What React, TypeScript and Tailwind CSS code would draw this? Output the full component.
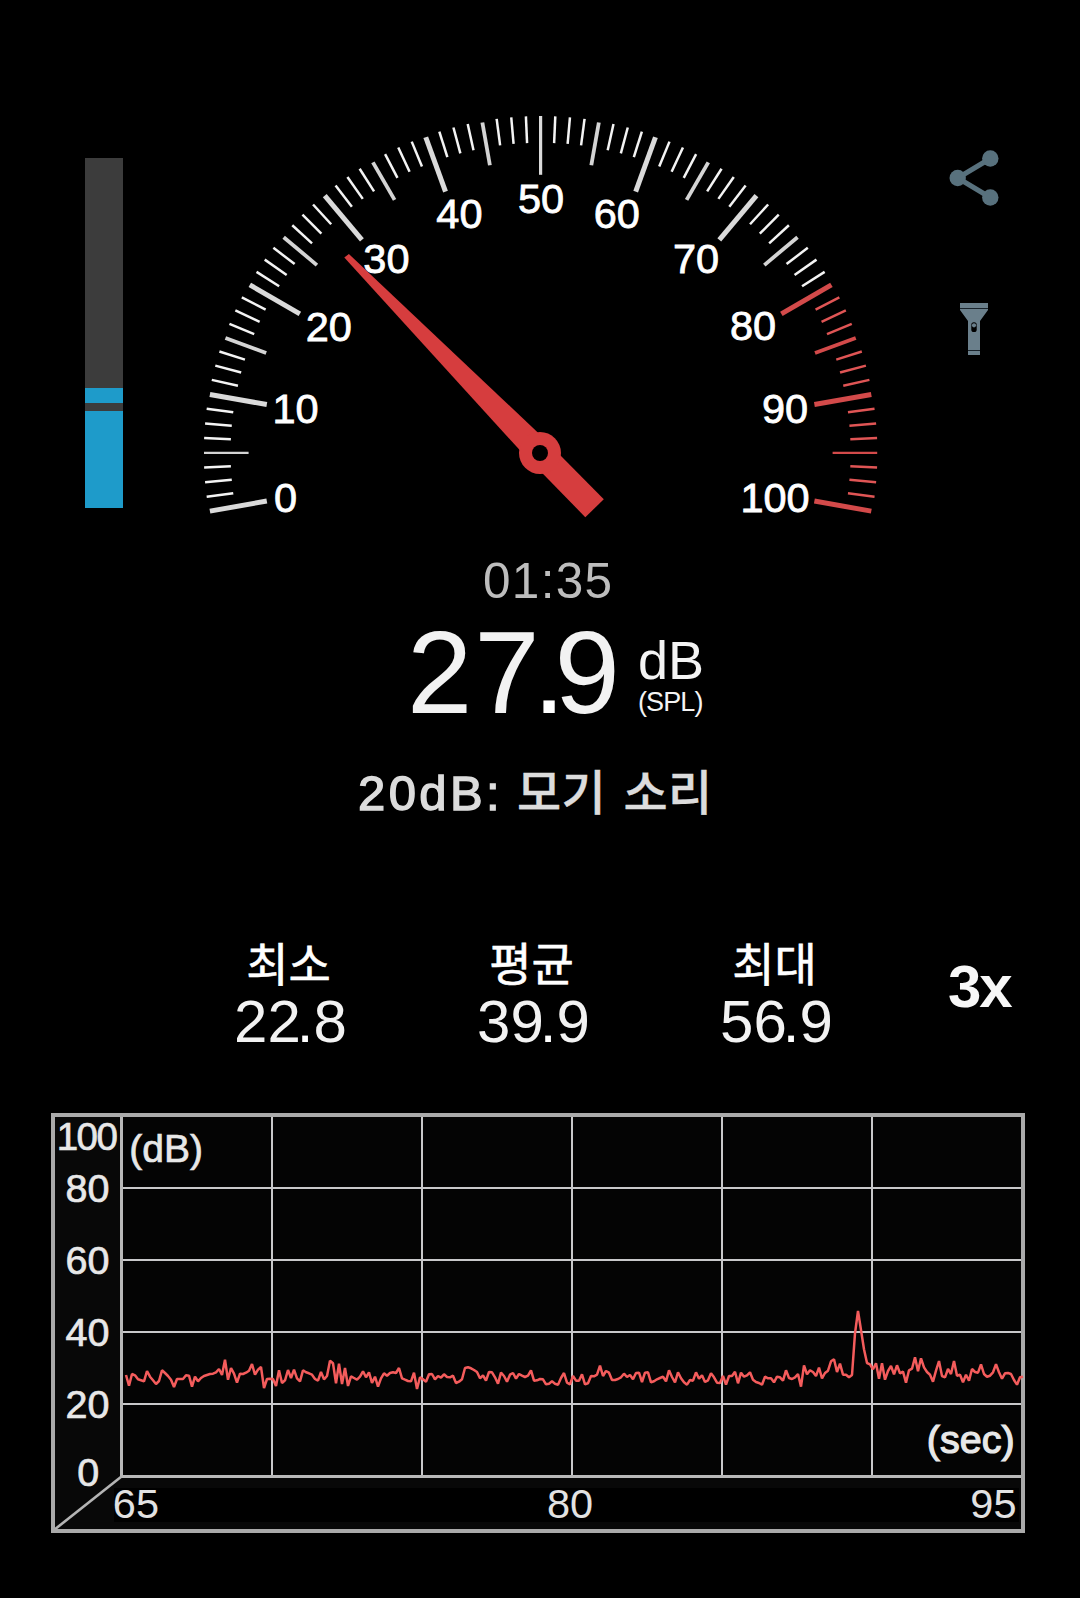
const FONT = "font-['Liberation_Sans','Noto_Sans_CJK_KR',sans-serif]";

const CX = 540.6;
const CY = 452.8;

const gaugeLabels = [
  { text: '0', x: 285.6, y: 512.4 },
  { text: '10', x: 295.6, y: 423 },
  { text: '20', x: 328.8, y: 341 },
  { text: '30', x: 386.4, y: 273 },
  { text: '40', x: 459.4, y: 228.3 },
  { text: '50', x: 541, y: 213.4 },
  { text: '60', x: 616.8, y: 228.3 },
  { text: '70', x: 696, y: 273 },
  { text: '80', x: 753, y: 340 },
  { text: '90', x: 785, y: 423 },
  { text: '100', x: 775, y: 512.4 },
];

const stats = [
  { label: '최소', whole: '22', digit: '8' },
  { label: '평균', whole: '39', digit: '9' },
  { label: '최대', whole: '56', digit: '9' },
];

const axisLabels = [
  { text: '100', x: 87.3, y: 1149.8 },
  { text: '80', x: 87.5, y: 1202.3 },
  { text: '60', x: 87.5, y: 1274.3 },
  { text: '40', x: 87.5, y: 1346.3 },
  { text: '20', x: 87.5, y: 1418.3 },
  { text: '0', x: 88.2, y: 1486.3 },
];

// One sample every 3px, as a depth in thirds of a pixel
const samples = [
  135, 167, 132, 136, 148, 151, 154, 123, 140, 151, 162, 153, 121, 129, 138, 149, 171, 147, 147, 147,
  136, 137, 170, 140, 154, 144, 138, 135, 132, 131, 127, 117, 135, 89, 149, 114, 131, 158, 131, 132,
  128, 122, 102, 134, 119, 111, 174, 147, 146, 147, 168, 121, 159, 151, 120, 144, 119, 145, 154, 121,
  127, 130, 134, 147, 152, 126, 148, 138, 92, 100, 160, 101, 162, 114, 168, 139, 144, 149, 140, 124,
  142, 127, 159, 140, 170, 145, 130, 137, 129, 127, 129, 114, 145, 149, 153, 154, 128, 177, 142, 148,
  155, 133, 132, 148, 138, 143, 133, 141, 142, 137, 159, 155, 148, 114, 112, 115, 120, 126, 145, 136,
  152, 126, 127, 142, 161, 128, 138, 155, 134, 129, 146, 132, 137, 141, 137, 121, 152, 151, 147, 148,
  163, 161, 154, 161, 164, 144, 129, 158, 163, 138, 152, 152, 133, 163, 160, 138, 139, 134, 107, 138,
  123, 128, 150, 150, 147, 142, 131, 141, 135, 148, 129, 128, 156, 128, 127, 157, 154, 148, 144, 140,
  154, 121, 141, 157, 127, 145, 157, 164, 150, 152, 127, 146, 136, 156, 151, 130, 142, 158, 159, 138,
  164, 138, 138, 125, 160, 128, 140, 136, 127, 149, 156, 159, 164, 140, 145, 145, 157, 140, 142, 152,
  121, 144, 147, 142, 132, 170, 106, 133, 121, 126, 138, 113, 145, 129, 122, 94, 88, 126, 101, 134,
  134, 142, 135, 10, -57, 0, 58, 99, 103, 118, 100, 146, 100, 149, 123, 108, 133, 106, 130, 125,
  158, 121, 116, 82, 124, 85, 112, 126, 134, 155, 122, 93, 138, 142, 117, 132, 93, 137, 134, 157,
  134, 152, 117, 126, 128, 103, 132, 140, 137, 127, 103, 127, 146, 130, 129, 132, 150, 164, 142, 140,
];

const trace = samples.map((v, i) => `${126 + i * 3},${(1330 + v / 3).toFixed(1)}`).join(' ');

const Tick = ({ index }: { index: number }) => {
  const angle = ((190 - index * 2.5) * Math.PI) / 180;
  const major = index % 8 === 0;
  const middle = index % 8 === 4;
  const red = index >= 64;
  const flat = index === 4 || index === 76;

  let inner = 310;
  let outer = 336.8;
  let width = 2.5;
  let color = red ? '#e05555' : '#f4f4f4';
  if (major) {
    inner = 278;
    outer = index === 40 ? 336.8 : 335.8;
    width = index === 40 ? 3.2 : 5;
    color = red ? '#d34a4a' : '#dadada';
  } else if (middle) {
    inner = 292;
    outer = flat ? 336.6 : 335.4;
    width = flat ? 2.2 : 3.8;
    color = red ? '#d34a4a' : '#d4d4d4';
  }

  return (
    <line
      x1={CX + inner * Math.cos(angle)}
      y1={CY - inner * Math.sin(angle)}
      x2={CX + outer * Math.cos(angle)}
      y2={CY - outer * Math.sin(angle)}
      stroke={color}
      strokeWidth={width}
    />
  );
};

const Gauge = () => (
  <svg className="mt-[110px] ml-[72px] h-[415px] w-[690px]" viewBox="195 110 690 415">
    {Array.from({ length: 81 }, (_, i) => (
      <Tick key={i} index={i} />
    ))}
    <g fill="#fff" stroke="#fff" strokeWidth="0.8" fontSize="41.5" textAnchor="middle">
      {gaugeLabels.map((l) => (
        <text key={l.text} x={l.x} y={l.y}>
          {l.text}
        </text>
      ))}
    </g>
    {/* Needle */}
    <g fill="#d63d3e">
      <polygon points="344.3,257.6 348.9,254 537,431.7 603.8,499.3 585.3,517.2 519,449.3" />
      <circle cx="540" cy="453" r="21" />
    </g>
    <circle cx="540" cy="453" r="8" fill="#000" />
  </svg>
);

const LevelBar = () => (
  <div className="mt-[158px] ml-[85px] flex h-[350px] w-[38px] flex-col justify-end bg-[#3c3c3c]">
    <div className="h-[15px] bg-[#1e9bca]" />
    <div className="mt-2 h-[97px] bg-[#1e9bca]" />
  </div>
);

const Actions = () => (
  <div className="mt-[148px] ml-[59px] flex flex-col gap-[91px]">
    <button aria-label="share">
      <svg className="h-[60px] w-[60px]" viewBox="944 148 60 60" fill="#58717d">
        <path d="M990.3 158.5L957.7 178L990.3 197.5" fill="none" stroke="#58717d" strokeWidth="5" />
        <circle cx="990.3" cy="158.5" r="8.2" />
        <circle cx="957.7" cy="178" r="8.2" />
        <circle cx="990.3" cy="197.5" r="8.2" />
      </svg>
    </button>
    <button aria-label="flashlight">
      <svg className="h-[60px] w-[60px]" viewBox="944 299 60 60">
        <path d="M960 303h28v7l-8 11v34h-12v-34l-8-11z" fill="#6a7f8b" />
        <path d="M960 308.5h28M968 350.5h12" stroke="#18222a" strokeWidth="1" />
        <rect x="971.3" y="322.3" width="5.4" height="9.7" rx="2.6" fill="#000" />
        <circle cx="974" cy="325.3" r="2.1" fill="#6a7f8b" />
      </svg>
    </button>
  </div>
);

const Chart = () => (
  <svg className="ml-[51px] h-[420px] w-[974px]" viewBox="51 1113 974 420">
    <rect x="53" y="1115" width="970" height="416" fill="#080808" />
    <rect x="123" y="1117" width="898" height="358" fill="#040404" />
    <rect x="114" y="1488" width="905" height="34" fill="#000" />
    <g fill="#c8c8ca">
      {[271, 421, 571, 721, 871].map((x) => (
        <rect key={x} x={x} y="1117" width="2" height="358" />
      ))}
      {[1187, 1259, 1331, 1403].map((y) => (
        <rect key={y} x="123" y={y} width="898" height="2" />
      ))}
    </g>
    <rect x="120" y="1117" width="3" height="361" fill="#b8b8b8" />
    <rect x="120" y="1475" width="901" height="3" fill="#b8b8b8" />
    <path d="M54 1530L121.5 1476.5" stroke="#b4b4b4" strokeWidth="2.6" />
    <rect x="53" y="1115" width="970" height="416" fill="none" stroke="#aaa" strokeWidth="4" />
    <polyline points={trace} fill="none" stroke="#f45c5c" strokeWidth="2.5" strokeLinejoin="bevel" />
    <g fill="#e8e8e8" stroke="#e8e8e8" strokeWidth="0.7" fontSize="40">
      {axisLabels.map((l) => (
        <text
          key={l.text}
          x={l.x}
          y={l.y}
          fontSize={l.text === '100' ? 38.5 : 39.5}
          textAnchor="middle"
          textLength={l.text === '100' ? 61 : undefined}
        >
          {l.text}
        </text>
      ))}
      <text x="129.3" y="1161.8" fontSize="39">
        (dB)
      </text>
      <text x="926.8" y="1453" fontSize="39.5" strokeWidth="1.2">
        (sec)
      </text>
    </g>
    <g fill="#e2e2e2" fontSize="41.5">
      <text x="112.8" y="1518">65</text>
      <text x="547" y="1518">80</text>
      <text x="970.3" y="1518">95</text>
    </g>
  </svg>
);

export default function App() {
  return (
    <main className={`h-[1598px] w-[1080px] overflow-hidden bg-black ${FONT}`}>
      <header className="flex h-[556px] items-start">
        <LevelBar />
        <Gauge />
        <Actions />
      </header>

      <div className="h-[50px] pl-[483px] text-[49.5px] leading-[50px] tracking-[1.3px] text-[#bdbdbd]">01:35</div>

      {/* Current reading */}
      <section className="mt-[8px] flex h-[118px] pl-[407px]">
        <p className="w-[231px] text-[117.5px] leading-[118px] whitespace-nowrap text-[#f2f2f2]">
          <span className="tracking-[2px]">2</span>
          <span className="tracking-[-7px]">7</span>
          <span className="tracking-[-11px] text-white">.</span>
          <span>9</span>
        </p>
        <div className="mt-[19px] flex flex-col text-[#f4f4f4]">
          <span className="text-[54px] leading-none">dB</span>
          <span className="mt-[2px] text-[27px] leading-none tracking-[-0.9px]">(SPL)</span>
        </div>
      </section>

      <p className="mt-[36px] h-[50px] pl-[358px] text-[49px] leading-[50px] tracking-[3.4px] whitespace-nowrap text-[#dcdcdc] [-webkit-text-stroke:1.4px_#dcdcdc]">
        20dB:
        <span className="ml-[14px] text-[48px] font-medium tracking-[0.3px] [word-spacing:4px] [-webkit-text-stroke:0.4px_#dcdcdc]">
          모기 소리
        </span>
      </p>

      <section className="mt-[124px] flex h-[171px] pl-[169px] text-white">
        {stats.map((s) => (
          <div key={s.label} className="flex w-[243px] flex-col items-center">
            <span className="mr-[4px] text-[46px] leading-none [-webkit-text-stroke:0.6px_#fff]">{s.label}</span>
            <p className="mt-[4px] text-[60px] leading-none text-[#f2f2f2]">
              <span>{s.whole[0]}</span>
              <span className="tracking-[-4px]">{s.whole[1]}</span>
              <span className="text-white">.</span>
              <span>{s.digit}</span>
            </p>
          </div>
        ))}
        <button className="mt-[15px] ml-[50px] self-start text-[60px] leading-none font-bold tracking-[-2px] text-[#f7f7f7]">
          3x
        </button>
      </section>

      <Chart />
    </main>
  );
}
